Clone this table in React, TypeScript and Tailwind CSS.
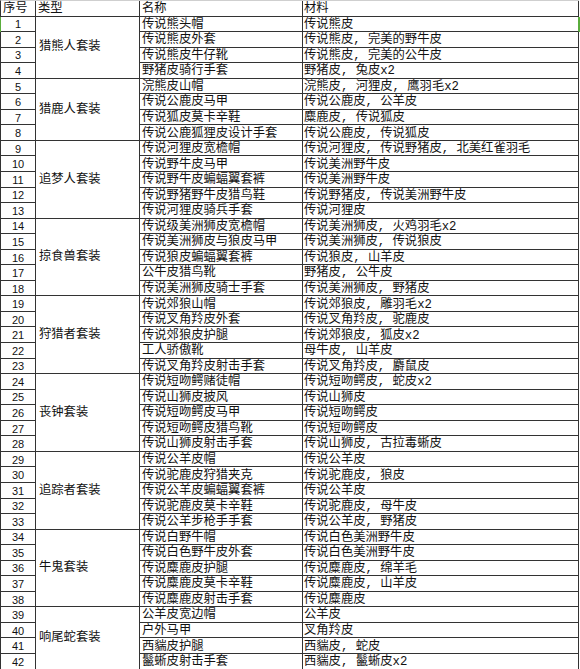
import React from 'react';

interface Item {
  no: number;
  name: string;
  mat: string;
}

interface Group {
  type: string;
  items: Item[];
}

const groups: Group[] = [
  {
    type: '猎熊人套装',
    items: [
      { no: 1, name: '传说熊头帽', mat: '传说熊皮' },
      { no: 2, name: '传说熊皮外套', mat: '传说熊皮, 完美的野牛皮' },
      { no: 3, name: '传说熊皮牛仔靴', mat: '传说熊皮, 完美的公牛皮' },
      { no: 4, name: '野猪皮骑行手套', mat: '野猪皮, 兔皮x2' },
    ],
  },
  {
    type: '猎鹿人套装',
    items: [
      { no: 5, name: '浣熊皮山帽', mat: '浣熊皮, 河狸皮, 鹰羽毛x2' },
      { no: 6, name: '传说公鹿皮马甲', mat: '传说公鹿皮, 公羊皮' },
      { no: 7, name: '传说狐皮莫卡辛鞋', mat: '麋鹿皮, 传说狐皮' },
      { no: 8, name: '传说公鹿狐狸皮设计手套', mat: '传说公鹿皮, 传说狐皮' },
    ],
  },
  {
    type: '追梦人套装',
    items: [
      { no: 9, name: '传说河狸皮宽檐帽', mat: '传说河狸皮, 传说野猪皮, 北美红雀羽毛' },
      { no: 10, name: '传说野牛皮马甲', mat: '传说美洲野牛皮' },
      { no: 11, name: '传说野牛皮蝙蝠翼套裤', mat: '传说美洲野牛皮' },
      { no: 12, name: '传说野猪野牛皮猎鸟鞋', mat: '传说野猪皮, 传说美洲野牛皮' },
      { no: 13, name: '传说河狸皮骑兵手套', mat: '传说河狸皮' },
    ],
  },
  {
    type: '掠食兽套装',
    items: [
      { no: 14, name: '传说级美洲狮皮宽檐帽', mat: '传说美洲狮皮, 火鸡羽毛x2' },
      { no: 15, name: '传说美洲狮皮与狼皮马甲', mat: '传说美洲狮皮, 传说狼皮' },
      { no: 16, name: '传说狼皮蝙蝠翼套裤', mat: '传说狼皮, 山羊皮' },
      { no: 17, name: '公牛皮猎鸟靴', mat: '野猪皮, 公牛皮' },
      { no: 18, name: '传说美洲狮皮骑士手套', mat: '传说美洲狮皮, 野猪皮' },
    ],
  },
  {
    type: '狩猎者套装',
    items: [
      { no: 19, name: '传说郊狼山帽', mat: '传说郊狼皮, 雕羽毛x2' },
      { no: 20, name: '传说叉角羚皮外套', mat: '传说叉角羚皮, 驼鹿皮' },
      { no: 21, name: '传说郊狼皮护腿', mat: '传说郊狼皮, 狐皮x2' },
      { no: 22, name: '工人骄傲靴', mat: '母牛皮, 山羊皮' },
      { no: 23, name: '传说叉角羚皮射击手套', mat: '传说叉角羚皮, 麝鼠皮' },
    ],
  },
  {
    type: '丧钟套装',
    items: [
      { no: 24, name: '传说短吻鳄赌徒帽', mat: '传说短吻鳄皮, 蛇皮x2' },
      { no: 25, name: '传说山狮皮披风', mat: '传说山狮皮' },
      { no: 26, name: '传说短吻鳄皮马甲', mat: '传说短吻鳄皮' },
      { no: 27, name: '传说短吻鳄皮猎鸟靴', mat: '传说短吻鳄皮' },
      { no: 28, name: '传说山狮皮射击手套', mat: '传说山狮皮, 古拉毒蜥皮' },
    ],
  },
  {
    type: '追踪者套装',
    items: [
      { no: 29, name: '传说公羊皮帽', mat: '传说公羊皮' },
      { no: 30, name: '传说驼鹿皮狩猎夹克', mat: '传说驼鹿皮, 狼皮' },
      { no: 31, name: '传说公羊皮蝙蝠翼套裤', mat: '传说公羊皮' },
      { no: 32, name: '传说驼鹿皮莫卡辛鞋', mat: '传说驼鹿皮, 母牛皮' },
      { no: 33, name: '传说公羊步枪手手套', mat: '传说公羊皮, 野猪皮' },
    ],
  },
  {
    type: '牛鬼套装',
    items: [
      { no: 34, name: '传说白野牛帽', mat: '传说白色美洲野牛皮' },
      { no: 35, name: '传说白色野牛皮外套', mat: '传说白色美洲野牛皮' },
      { no: 36, name: '传说麋鹿皮护腿', mat: '传说麋鹿皮, 绵羊毛' },
      { no: 37, name: '传说麋鹿皮莫卡辛鞋', mat: '传说麋鹿皮, 山羊皮' },
      { no: 38, name: '传说麋鹿皮射击手套', mat: '传说麋鹿皮' },
    ],
  },
  {
    type: '响尾蛇套装',
    items: [
      { no: 39, name: '公羊皮宽边帽', mat: '公羊皮' },
      { no: 40, name: '户外马甲', mat: '叉角羚皮' },
      { no: 41, name: '西貒皮护腿', mat: '西貒皮, 蛇皮' },
      { no: 42, name: '鬣蜥皮射击手套', mat: '西貒皮, 鬣蜥皮x2' },
    ],
  },
];

const spanClass: Record<number, string> = {
  4: 'row-span-4',
  5: 'row-span-5',
};

const cell = 'border-r border-b border-[#333] flex items-center leading-none overflow-hidden whitespace-nowrap';
const cjk = "font-['Liberation_Mono','Noto_Sans_CJK_SC',monospace] text-[12.3px] text-[#111]";

export default function App() {
  return (
    <div className="w-[580px] h-[669px] bg-white overflow-hidden">
      <div className="w-[579px] border-l border-t border-l-[#333] border-t-[#cfcfcf] grid grid-cols-[35px_104px_163px_276px] grid-rows-[repeat(43,15.56px)]">
        {/* header */}
        <div className={`${cell} ${cjk} pl-[2px] pt-[2px]`}>序号</div>
        <div className={`${cell} ${cjk} pl-[2px] pt-[2px]`}>类型</div>
        <div className={`${cell} ${cjk} pl-[2px] pt-[2px]`}>名称</div>
        <div className={`${cell} ${cjk} pl-[1px] pt-[2px]`}>材料</div>

        {groups.map((g) =>
          g.items.map((it, i) => (
            <React.Fragment key={it.no}>
              <div
                className={`${cell} col-start-1 justify-center pt-[2px] font-['Liberation_Sans',Arial,sans-serif] text-[11px] text-[#111] ${
                  it.no === 1 ? 'shadow-[-1px_0_0_#5aad3c]' : ''
                }`}
              >
                {it.no}
              </div>
              {i === 0 && (
                <div className={`${cell} ${cjk} col-start-2 ${spanClass[g.items.length]} pl-[3px] pt-[1px]`}>
                  {g.type}
                </div>
              )}
              <div className={`${cell} ${cjk} col-start-3 pl-[2px] pt-[2px]`}>{it.name}</div>
              <div
                className={`${cell} ${cjk} col-start-4 pl-[1px] pt-[2px] ${
                  it.no === 1 ? 'border-r-[#5aad3c] shadow-[1px_0_0_#5aad3c]' : ''
                }`}
              >
                {it.mat}
              </div>
            </React.Fragment>
          ))
        )}
      </div>
    </div>
  );
}
